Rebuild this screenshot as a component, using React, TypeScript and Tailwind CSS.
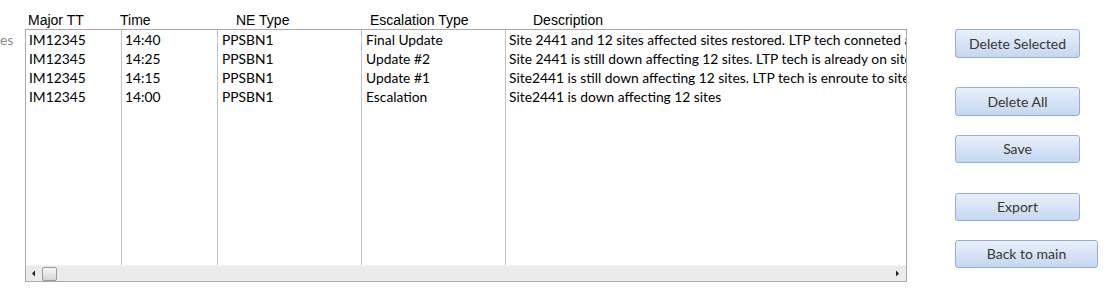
const rows = [
  ['IM12345', '14:40', 'PPSBN1', 'Final Update', 'Site 2441 and 12 sites affected sites restored. LTP tech conneted a'],
  ['IM12345', '14:25', 'PPSBN1', 'Update #2', 'Site 2441 is still down affecting 12 sites. LTP tech is already on site'],
  ['IM12345', '14:15', 'PPSBN1', 'Update #1', 'Site2441 is still down affecting 12 sites. LTP tech is enroute to site'],
  ['IM12345', '14:00', 'PPSBN1', 'Escalation', 'Site2441 is down affecting 12 sites'],
];

const columns = [
  { width: 'w-[96px]', pad: 'pl-[3px]', border: true },
  { width: 'w-[96px]', pad: 'pl-[3px]', border: true },
  { width: 'w-[144px]', pad: 'pl-[4px]', border: true },
  { width: 'w-[144px]', pad: 'pl-[4px]', border: true },
  { width: 'w-[400px]', pad: 'pl-[3px]', border: false },
];

const buttonBase =
  'flex items-center justify-center rounded-[3px] border border-[#93afd9] bg-linear-to-b from-[#e9f0fb] to-[#c5d7f1] text-[14px] leading-none text-[#3a3632]';

const App = () => {
  return (
    <div className="flex h-[302px] w-[1106px] overflow-hidden bg-white font-['Lato',sans-serif] text-black">
      {/* cut-off label on the left */}
      <div className="w-[25px] pt-[30px] text-[13.8px] leading-[19px] text-[#8a8a8a]">es</div>

      {/* list box */}
      <div className="flex w-[882px] flex-col">
        <div className="flex h-[29px] pl-[3px] pt-[12px] font-['Liberation_Sans',sans-serif] text-[14px] leading-[16px]">
          <span className="w-[92px]">Major TT</span>
          <span className="w-[116px]">Time</span>
          <span className="w-[134px]">NE Type</span>
          <span className="w-[163px]">Escalation Type</span>
          <span>Description</span>
        </div>

        <div className="flex h-[253px] flex-col border border-[#a9a9a9]">
          <div className="flex flex-1">
            {columns.map((col, c) => (
              <div
                key={c}
                className={`${col.width} ${col.pad} overflow-hidden ${col.border ? 'border-r border-[#c3c3c3]' : ''}`}
              >
                {rows.map((r, i) => (
                  <div key={i} className="h-[19px] whitespace-nowrap text-[13.8px] leading-[19px]">
                    {r[c]}
                  </div>
                ))}
              </div>
            ))}
          </div>

          {/* horizontal scrollbar */}
          <div className="flex h-[16px] items-center border-t border-[#f2f2f2] bg-[#ebebeb]">
            <svg width="16" height="16" viewBox="0 0 16 16" className="shrink-0">
              <path d="M9 4.5 L6 7.5 L9 10.5 Z" fill="#222" />
            </svg>
            <div className="h-[14px] w-[15px] rounded-[2px] border border-[#9b9b9b] bg-linear-to-b from-[#f6f6f6] to-[#d6d6d6]" />
            <div className="flex-1" />
            <svg width="16" height="16" viewBox="0 0 16 16" className="shrink-0">
              <path d="M6 4.5 L9 7.5 L6 10.5 Z" fill="#222" />
            </svg>
          </div>
        </div>
      </div>

      {/* buttons */}
      <div className="ml-[48px] flex flex-col items-start pt-[29px]">
        <button className={`${buttonBase} h-[29px] w-[125px]`}>Delete Selected</button>
        <button className={`${buttonBase} mt-[29px] h-[29px] w-[125px]`}>Delete All</button>
        <button className={`${buttonBase} mt-[19px] h-[28px] w-[125px]`}>Save</button>
        <button className={`${buttonBase} mt-[30px] h-[28px] w-[125px]`}>Export</button>
        <button className={`${buttonBase} mt-[19px] h-[28px] w-[143px]`}>Back to main</button>
      </div>
    </div>
  );
};

export default App;
